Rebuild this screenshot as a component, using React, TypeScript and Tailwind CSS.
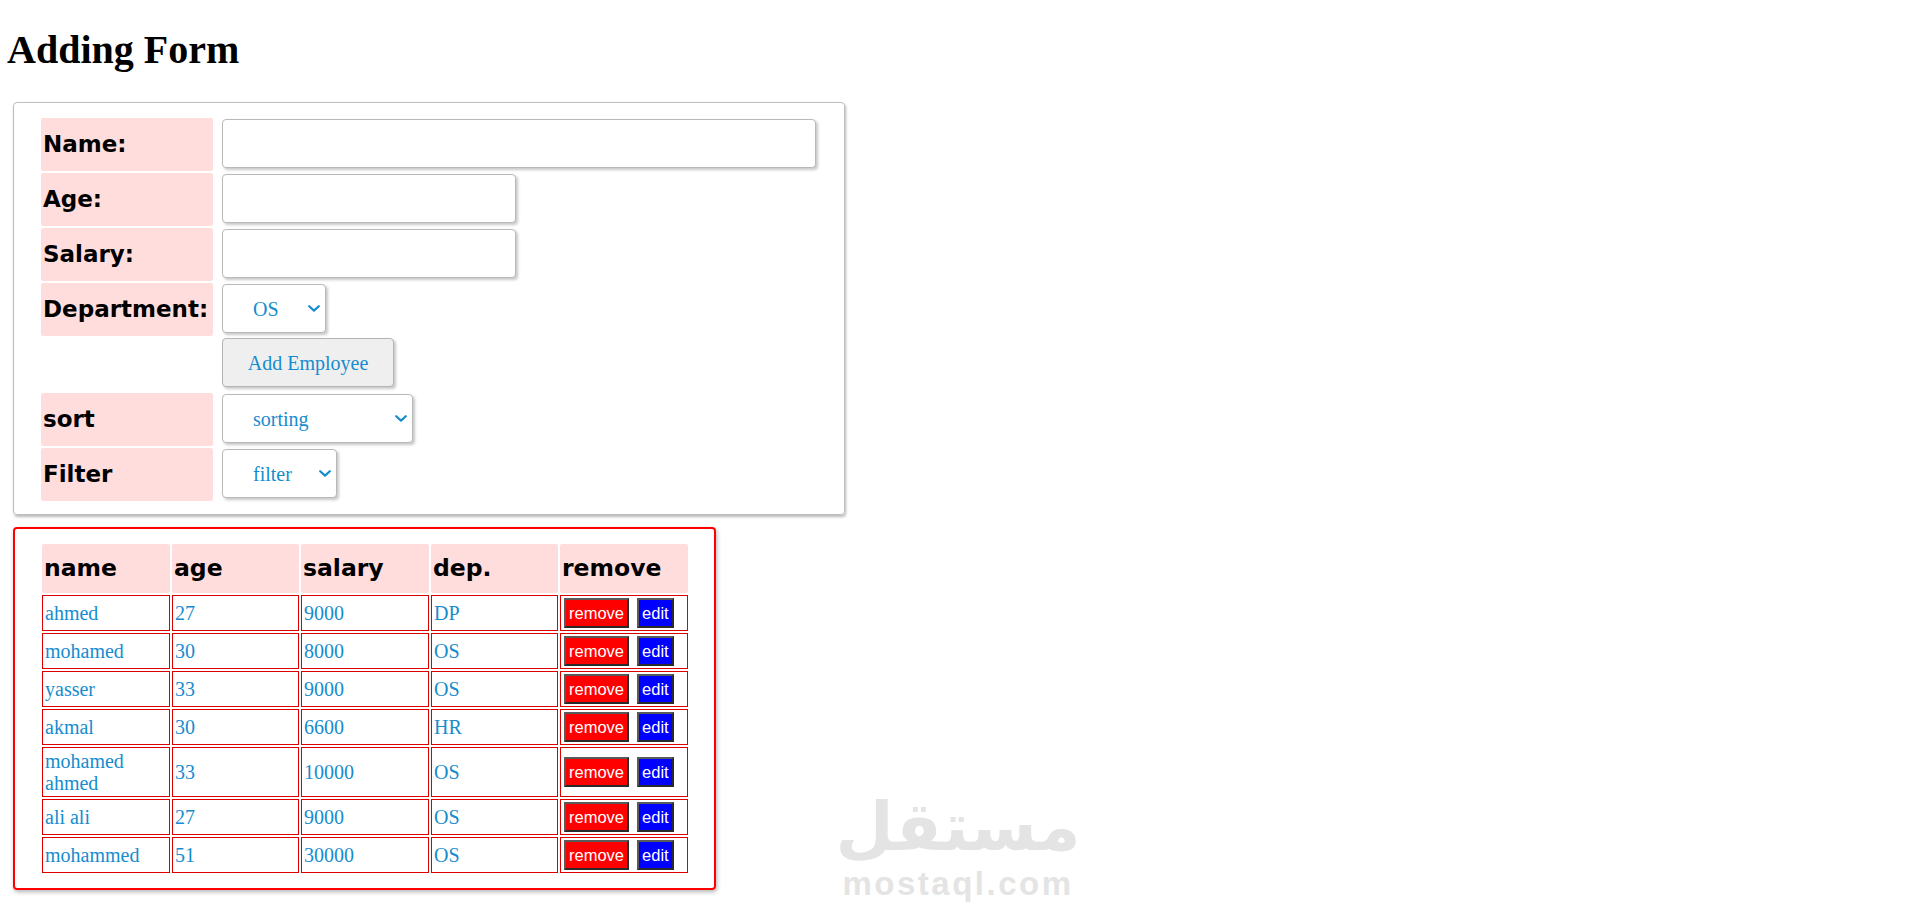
import React from "react";

const serif = { fontFamily: '"Liberation Serif", "Times New Roman", serif' };
const sansBold = { fontFamily: '"DejaVu Sans", Verdana, sans-serif' };
const arial = { fontFamily: '"Liberation Sans", Arial, sans-serif' };

function Chevron() {
  return (
    <svg width="12" height="7" viewBox="0 0 12 7" className="shrink-0">
      <path d="M1.2 1.2 L6 5.6 L10.8 1.2" fill="none" stroke="#168ccf" strokeWidth="2.2" strokeLinecap="round" strokeLinejoin="round" />
    </svg>
  );
}

function FakeSelect({ value, width }: { value: string; width: string }) {
  return (
    <div
      className={`${width} h-[49px] mt-[1px] flex items-center justify-between pl-[30px] pr-[5px] bg-white border border-[#b9b9b9] rounded-[4px] shadow-[2px_2px_3px_rgba(0,0,0,0.22)] text-[20px] text-[#168ccf]`}
      style={serif}
    >
      <span className="leading-none">{value}</span>
      <Chevron />
    </div>
  );
}

function Label({ text }: { text: string }) {
  return (
    <div
      className="h-[53px] bg-[#ffdddd] rounded-[2px] flex items-center pl-[2px] text-[23px] font-bold text-black whitespace-nowrap"
      style={sansBold}
    >
      {text}
    </div>
  );
}

const rows = [
  ["ahmed", "27", "9000", "DP"],
  ["mohamed", "30", "8000", "OS"],
  ["yasser", "33", "9000", "OS"],
  ["akmal", "30", "6600", "HR"],
  ["mohamed ahmed", "33", "10000", "OS"],
  ["ali ali", "27", "9000", "OS"],
  ["mohammed", "51", "30000", "OS"],
];

const colW = ["w-[128px]", "w-[127px]", "w-[128px]", "w-[127px]", "w-[128px]"];

export default function App() {
  return (
    <div className="relative w-full h-[921px] overflow-hidden bg-white">
      <h1 className="ml-[7px] pt-[27px] text-[40px] leading-[46px] font-bold text-black" style={serif}>
        Adding Form
      </h1>

      {/* Form panel */}
      <div className="ml-[13px] mt-[29px] w-[832px] h-[413px] border border-[#bdbdbd] rounded-[4px] shadow-[1px_2px_3px_rgba(0,0,0,0.28)] pl-[27px] pt-[15px]">
        <div className="grid grid-cols-[172px_auto] gap-x-[9px] gap-y-[2px] items-start justify-start">
          <Label text="Name:" />
          <div className="w-[594px] h-[49px] mt-[1px] bg-white border border-[#b9b9b9] rounded-[4px] shadow-[2px_2px_3px_rgba(0,0,0,0.22)]" />

          <Label text="Age:" />
          <div className="w-[294px] h-[49px] mt-[1px] bg-white border border-[#b9b9b9] rounded-[4px] shadow-[2px_2px_3px_rgba(0,0,0,0.22)]" />

          <Label text="Salary:" />
          <div className="w-[294px] h-[49px] mt-[1px] bg-white border border-[#b9b9b9] rounded-[4px] shadow-[2px_2px_3px_rgba(0,0,0,0.22)]" />

          <Label text="Department:" />
          <FakeSelect value="OS" width="w-[104px]" />

          <div className="h-[53px]" />
          <button
            type="button"
            className="w-[172px] h-[49px] bg-[#efefef] border border-[#b4b4b4] rounded-[4px] shadow-[2px_2px_3px_rgba(0,0,0,0.22)] text-[20px] text-[#168ccf]"
            style={serif}
          >
            Add Employee
          </button>

          <Label text="sort" />
          <FakeSelect value="sorting" width="w-[191px]" />

          <Label text="Filter" />
          <FakeSelect value="filter" width="w-[115px]" />
        </div>
      </div>

      {/* Table box */}
      <div className="ml-[13px] mt-[12px] w-[703px] border-2 border-[#ff0000] rounded-[4px] shadow-[1px_2px_4px_rgba(0,0,0,0.3)] pl-[25px] pt-[13px] pb-[13px]">
        <table className="border-separate border-spacing-[2px] table-fixed">
          <thead>
            <tr>
              {["name", "age", "salary", "dep.", "remove"].map((h, i) => (
                <th
                  key={h}
                  className={`${colW[i]} h-[49px] bg-[#ffdddd] rounded-[2px] text-left align-middle pl-[2px] text-[23.5px] font-bold text-black`}
                  style={sansBold}
                >
                  {h}
                </th>
              ))}
            </tr>
          </thead>
          <tbody>
            {rows.map((r, ri) => (
              <tr key={ri}>
                {r.map((c, ci) => (
                  <td
                    key={ci}
                    className={`${colW[ci]} border border-[#dd0000] px-[2px] py-[2px] align-middle text-[20px] leading-[22px] text-[#168ccf]`}
                    style={serif}
                  >
                    {c}
                  </td>
                ))}
                <td className="w-[128px] border border-[#dd0000] pl-[3px] py-[2px] align-middle">
                  <div className="flex items-center gap-[8px]">
                    <button
                      type="button"
                      className="h-[30px] px-[3px] bg-[#ff0000] text-white text-[16.5px] leading-none border-2 border-t-[#5a5a5a] border-l-[#5a5a5a] border-b-[#2a2a2a] border-r-[#2a2a2a]"
                      style={arial}
                    >
                      remove
                    </button>
                    <button
                      type="button"
                      className="h-[30px] px-[3px] bg-[#0000ff] text-white text-[16.5px] leading-none border-2 border-t-[#5a5a5a] border-l-[#5a5a5a] border-b-[#2a2a2a] border-r-[#2a2a2a]"
                      style={arial}
                    >
                      edit
                    </button>
                  </div>
                </td>
              </tr>
            ))}
          </tbody>
        </table>
      </div>

      {/* Watermark */}
      <div className="absolute left-[843px] top-[788px] w-[230px] flex flex-col items-center pointer-events-none select-none text-[#e4e4e4]">
        <div className="text-[67px] leading-[78px] font-bold" style={{ fontFamily: '"DejaVu Sans", sans-serif' }} dir="rtl">
          مستقل
        </div>
        <div className="text-[33px] leading-[36px] font-bold tracking-[2.5px]" style={arial}>
          mostaql.com
        </div>
      </div>
    </div>
  );
}
